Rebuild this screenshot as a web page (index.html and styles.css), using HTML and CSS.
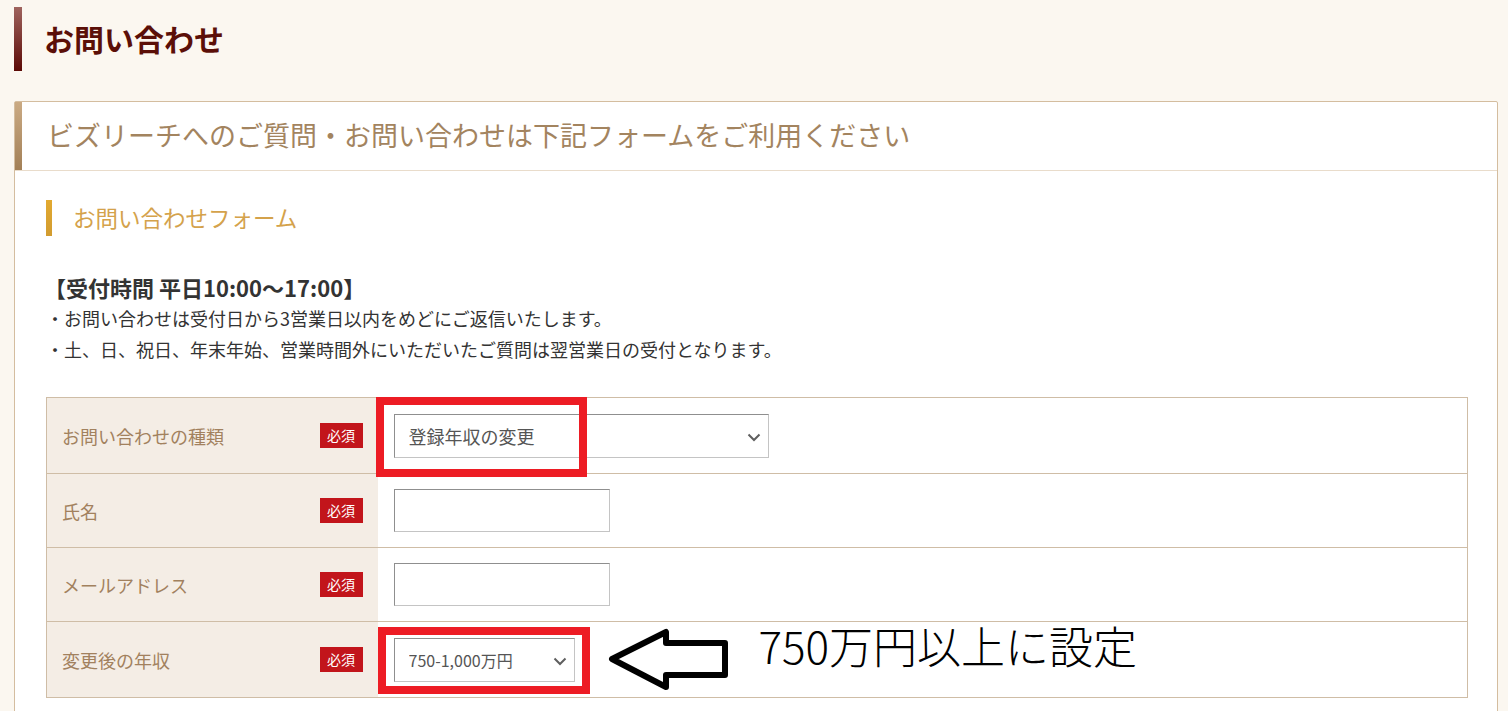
FILE: index.html
```html
<!doctype html>
<html lang="ja">
  <head>
    <meta charset="UTF-8">
    <meta name="viewport" content="width=device-width, initial-scale=1.0">
    <title>お問い合わせ</title>
    <link rel="stylesheet" href="styles.css">
  </head>
  <body>
    <div class="page">
      <h1 class="page-title">お問い合わせ</h1>

      <div class="card">
        <div class="card-head">ビズリーチへのご質問・お問い合わせは下記フォームをご利用ください</div>

        <div class="card-body">
          <h2 class="form-title">お問い合わせフォーム</h2>

          <div class="notice">
            <p class="hours">【受付時間 平日10:00～17:00】</p>
            <p>・お問い合わせは受付日から3営業日以内をめどにご返信いたします。</p>
            <p>・土、日、祝日、年末年始、営業時間外にいただいたご質問は翌営業日の受付となります。</p>
          </div>

          <table class="form-table">
            <tr class="row-select">
              <th>
                <div class="label">
                  <span>お問い合わせの種類</span>
                  <span class="required">必須</span>
                </div>
              </th>
              <td>
                <span class="select-wrap">
                  <select class="select select-wide">
                    <option>登録年収の変更</option>
                  </select>
                  <svg class="chevron" width="14" height="9" viewBox="0 0 14 9"><path d="M1.5 1.5 L7 7 L12.5 1.5" fill="none" stroke="#5f5f5f" stroke-width="2"/></svg>
                  <span class="mark mark-type"></span>
                </span>
              </td>
            </tr>
            <tr>
              <th>
                <div class="label">
                  <span>氏名</span>
                  <span class="required">必須</span>
                </div>
              </th>
              <td><input class="text-input" type="text"></td>
            </tr>
            <tr>
              <th>
                <div class="label">
                  <span>メールアドレス</span>
                  <span class="required">必須</span>
                </div>
              </th>
              <td><input class="text-input" type="text"></td>
            </tr>
            <tr class="row-select">
              <th>
                <div class="label">
                  <span>変更後の年収</span>
                  <span class="required">必須</span>
                </div>
              </th>
              <td>
                <div class="income">
                  <span class="select-wrap">
                    <select class="select select-small">
                      <option>750-1,000万円</option>
                    </select>
                    <svg class="chevron" width="14" height="9" viewBox="0 0 14 9"><path d="M1.5 1.5 L7 7 L12.5 1.5" fill="none" stroke="#5f5f5f" stroke-width="2"/></svg>
                    <span class="mark mark-income"></span>
                  </span>
                  <svg class="arrow" width="126" height="66" viewBox="0 0 126 66">
                    <polygon points="6,32 60,5 60,16 119,16 119,48 60,48 60,60" fill="#fff" stroke="#000" stroke-width="6" stroke-linejoin="round"/>
                  </svg>
                  <span class="note">750万円以上に設定</span>
                </div>
              </td>
            </tr>
          </table>
        </div>
      </div>
    </div>
  </body>
</html>
```

FILE: styles.css
```css
* {
  margin: 0;
  padding: 0;
  box-sizing: border-box;
}

body {
  font-family: "Noto Sans CJK JP", "Noto Sans", sans-serif;
  color: #333333;
  background: #fbf7f0;
  overflow: hidden;
}

.page {
  padding: 7px 10px 0 14px;
}

.page-title {
  height: 64px;
  line-height: 62px;
  padding-left: 22px;
  font-size: 30px;
  font-weight: 700;
  color: #5b0f08;
  border-left: 8px solid #7a2a24;
  border-image: linear-gradient(#a0655f, #5a0804) 1;
}

.card {
  margin-top: 30px;
  background: #ffffff;
  border: 1px solid #d4bd9f;
  border-radius: 2px;
  height: 700px;
}

.card-head {
  height: 69px;
  line-height: 66px;
  padding-left: 25px;
  font-size: 27px;
  color: #a3845f;
  border-left: 7px solid #b8956c;
  border-image: linear-gradient(#cbab84, #a27f56) 1;
  border-bottom: 1px solid #e9dccb;
  position: relative;
}

.card-head::after {
  content: "";
  position: absolute;
  left: -7px;
  right: 0;
  bottom: -1px;
  height: 1px;
  background: #e9dccb;
}

.card-body {
  padding: 29px 30px 40px 31px;
}

.form-title {
  height: 36px;
  line-height: 34px;
  padding-left: 21px;
  font-size: 22.5px;
  font-weight: 400;
  color: #d4a24b;
  border-left: 6px solid #dba431;
  border-image: linear-gradient(#e3aa30, #d19b30) 1;
}

.notice {
  margin-top: 36px;
  font-size: 18px;
  line-height: 31px;
  color: #333333;
}

.notice .hours {
  font-size: 22px;
  font-weight: 700;
  line-height: 30px;
  margin-bottom: 1px;
  margin-left: -2px;
}

.form-table {
  margin-top: 32px;
  width: 1422px;
  border-collapse: collapse;
  border: 1px solid #cfbda6;
}

.form-table tr {
  height: 74px;
}

.form-table tr.row-select {
  height: 76px;
}

.form-table th,
.form-table td {
  border-bottom: 1px solid #cfbda6;
  vertical-align: middle;
}

.form-table th {
  width: 331px;
  background: #f4ede5;
  font-weight: 400;
  text-align: left;
  padding: 0 15px 0 15px;
}

.form-table td {
  padding: 0 16px;
  background: #ffffff;
}

.label {
  display: flex;
  align-items: center;
  justify-content: space-between;
  font-size: 18px;
  color: #a2815e;
}

.required {
  display: inline-block;
  width: 43px;
  height: 25px;
  line-height: 25px;
  text-align: center;
  font-size: 14px;
  color: #ffffff;
  background: #c2151b;
}

.select-wrap {
  position: relative;
  display: inline-block;
  vertical-align: middle;
}

.select {
  appearance: none;
  -webkit-appearance: none;
  display: block;
  height: 44px;
  padding-left: 14px;
  font-family: inherit;
  color: #555555;
  background: #ffffff;
  border: 1px solid #8f8f8f;
  border-right-color: #c4c4c4;
  border-bottom-color: #c4c4c4;
  border-radius: 0;
  outline: none;
}

.select-wide {
  width: 375px;
  font-size: 18px;
}

.select-small {
  width: 181px;
  font-size: 16px;
}

.chevron {
  position: absolute;
  right: 8px;
  top: 19px;
  pointer-events: none;
}

.text-input {
  display: block;
  width: 216px;
  height: 43px;
  border: 1px solid #8f8f8f;
  border-right-color: #c4c4c4;
  border-bottom-color: #c4c4c4;
  background: #ffffff;
  outline: none;
}

/* red annotation frames */
.mark {
  position: absolute;
  border: 8px solid #ed1c24;
  pointer-events: none;
}

.mark-type {
  left: -18px;
  top: -17px;
  width: 211px;
  height: 80px;
}

.mark-income {
  left: -16px;
  top: -11px;
  width: 212px;
  height: 67px;
}

.income {
  display: flex;
  align-items: center;
}

.arrow {
  margin-left: 31px;
  flex-shrink: 0;
}

.note {
  align-self: flex-start;
  margin-top: -8px;
  margin-left: 27px;
  font-size: 44px;
  font-weight: 300;
  line-height: 52px;
  color: #000000;
  white-space: nowrap;
}
```
